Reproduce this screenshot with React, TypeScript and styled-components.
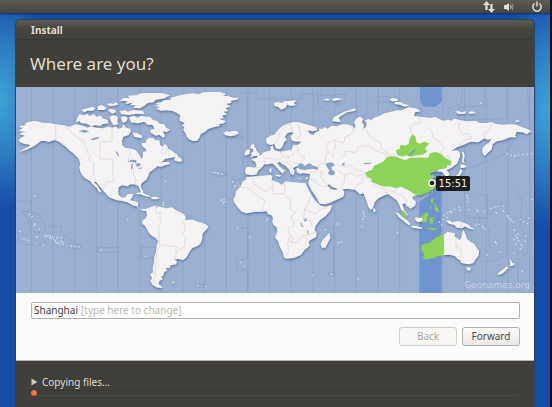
import React from "react";
import styled, { createGlobalStyle } from "styled-components";

const GlobalStyle = createGlobalStyle`
  * { box-sizing: border-box; }
  body { margin: 0; font-family: "Noto Sans", "Open Sans", sans-serif; }
  button, input { font: inherit; margin: 0; }
`;

const Desktop = styled.div`
  min-height: 100vh;
  display: flex;
  flex-direction: column;
  border-right: 2px solid #08101c;
  background:
    radial-gradient(ellipse 60px 110px at 0 100px, #3fa3d6 0, #3fa3d6aa 40%, transparent 100%),
    radial-gradient(ellipse 60px 120px at 100% 110px, #3fa3d9 0, #3fa3d9aa 40%, transparent 100%),
    #164ba6;
`;

const TopPanel = styled.header`
  height: 13px;
  display: flex;
  justify-content: flex-end;
  align-items: center;
  gap: 8px;
  padding-right: 7px;
  background: linear-gradient(#5d5b54, #45443e);
  box-shadow: 0 1px 2px #102a60;
`;

const PanelButton = styled.button`
  display: flex;
  padding: 0;
  border: 0;
  background: none;
  color: #e4dfd3;
  &:last-child { margin-left: 8px; }
`;

const InstallerWindow = styled.main`
  flex: 1;
  display: flex;
  flex-direction: column;
  margin: 7px 16px 0;
  border-radius: 5px 5px 0 0;
  overflow: hidden;
  background: #403f3a;
  box-shadow: 0 0 1px 1px #30405c;
`;

const TitleBar = styled.div`
  height: 20px;
  padding-left: 15px;
  border-bottom: 1px solid #3a3935;
  background: linear-gradient(#5e5c52, #45443e 9px, #403f3a);
  color: #e2ddd2;
  font-size: 10px;
  font-weight: 700;
  line-height: 20px;
`;

const Heading = styled.h1`
  margin: 0;
  padding: 0 14px;
  color: #dfdbd2;
  font-size: 17px;
  font-weight: 400;
  line-height: 47px;
`;

const MapFrame = styled.section`
  position: relative;
  background: #9aafd2;
`;

const MapDrawing = styled.svg`
  display: block;
  width: 100%;
  height: auto;
`;

const CityTime = styled.span`
  position: absolute;
  left: 81%;
  top: 43%;
  padding: 0 3px;
  border-radius: 2px;
  background: #1d1d1c;
  color: #f2f2ee;
  font: 10px/15px "DejaVu Sans", sans-serif;
`;

const Credit = styled.span`
  position: absolute;
  right: 4px;
  bottom: 2px;
  color: #c9d3e4;
  font: 9px/12px "DejaVu Sans", sans-serif;
`;

const Form = styled.form`
  display: flex;
  flex-direction: column;
  gap: 8px;
  padding: 9px 14px 14px 15px;
  border-bottom: 1px solid #b9b7b0;
  background: #fdfcfc;
`;

const CityField = styled.label`
  display: flex;
  align-items: center;
  gap: 3px;
  height: 17px;
  padding: 0 2px;
  border: 1px solid #b4b0aa;
  border-radius: 2px;
  background: #fff;
  font-size: 10px;
  line-height: 15px;
`;

const CityInput = styled.input`
  field-sizing: content;
  min-width: 0;
  padding: 0;
  border: 0;
  outline: 0;
  background: none;
  color: #3c3c3c;
`;

const Hint = styled.span`
  color: #bdb6ac;
`;

const Actions = styled.div`
  display: flex;
  justify-content: flex-end;
  gap: 5px;
`;

const ActionButton = styled.button`
  width: 58px;
  height: 19px;
  padding: 0;
  border: 1px solid #b3afa9;
  border-radius: 3px;
  background: linear-gradient(#fcfcfb, #eae8e6);
  color: #4c4c4c;
  font-size: 10px;
  line-height: 17px;
  &:disabled {
    border-color: #d3d0cc;
    background: #f8f7f6;
    color: #a9a7a3;
  }
`;

const Status = styled.footer`
  flex: 1;
  padding: 14px 14px 0 15px;
  background: #403f3a;
`;

const Expander = styled.button`
  display: flex;
  align-items: center;
  gap: 4px;
  padding: 0;
  border: 0;
  background: none;
  color: #dfdbd2;
  font-size: 10px;
  line-height: 14px;
`;

const Trough = styled.div`
  height: 6px;
  margin-top: 1px;
  border-top: 1px solid #383733;
  border-bottom: 1px solid #4a4944;
  border-radius: 3px;
`;

const Progress = styled.div`
  width: 6px;
  height: 6px;
  margin-top: -1px;
  border-radius: 3px;
  background: radial-gradient(#f58a5c, #d8542a);
`;

const pts = (dx: number, dy: number, s: string) =>
  "M" + s.split(" ").map((p) => {
    const [x, y] = p.split(",").map(Number);
    return `${x + dx},${y + dy}`;
  }).join("L");
const shape = (dx: number, dy: number, s: string) => pts(dx, dy, s) + "Z";

const land = [
  // North America
  shape(0, 0, "8,124 30,120 26,116 38,110 60,108 80,113 100,114 120,118 145,121 160,125 180,118 200,122 215,128 225,124 240,128 262,130 275,125 290,128 300,124 306,131 318,128 322,118 330,128 342,131 345,138 338,150 322,155 318,168 319,180 327,188 350,192 360,196 366,204 372,212 376,222 381,215 380,202 392,198 387,190 379,184 377,175 390,173 391,165 400,158 412,160 418,166 430,166 432,178 438,185 446,178 452,181 457,192 467,196 474,203 482,207 486,214 468,218 448,221 440,229 430,238 442,231 458,231 462,236 446,241 436,245 425,243 415,251 407,258 401,260 397,272 392,283 378,294 373,303 382,320 380,328 375,322 368,304 355,298 342,298 335,304 318,301 308,307 306,318 308,330 318,338 328,337 334,328 352,326 348,338 342,346 358,349 367,354 365,366 373,373 392,371 393,377 382,377 370,372 361,363 353,363 335,352 315,347 300,345 280,337 266,322 255,308 240,291 233,290 245,303 256,321 250,322 242,309 230,298 222,288 208,280 200,272 194,262 190,248 193,236 188,222 180,213 172,205 160,196 150,185 138,178 130,170 115,165 98,171 88,168 75,168 62,178 48,187 30,194 8,201 28,190 42,182 38,178 28,178 12,172 8,165 18,156 28,153 10,147 20,142 32,142 8,137 20,130"),
  // Canadian archipelago
  shape(0, 0, "184,98 190,88 205,91 213,86 220,93 235,88 240,95 255,92 260,100 275,105 277,115 260,117 253,124 240,120 225,123 212,116 195,114 190,108 180,113"),
  shape(0, 0, "196,76 212,70 230,66 239,70 230,77 215,77 205,82"),
  shape(0, 0, "244,65 256,59 272,69 265,75 246,75"),
  shape(0, 0, "272,57 285,55 290,58 300,52 307,58 295,62 282,63"),
  shape(0, 0, "276,75 285,72 298,75 300,82 288,86"),
  shape(0, 0, "312,78 328,76 335,80 352,75 380,77 386,88 360,86 340,90 315,87"),
  shape(0, 0, "280,96 292,90 306,96 304,110 308,118 292,121 286,110"),
  shape(0, 0, "314,97 326,93 335,99 331,110 320,113"),
  shape(0, 0, "310,47 325,38 342,40 335,32 360,31 375,25 405,24 440,25 462,31 445,40 420,44 412,52 395,54 385,62 372,70 350,68 360,61 342,61 350,53 328,57 335,49"),
  shape(0, 0, "340,97 352,92 365,98 375,92 392,95 403,95 410,104 424,108 430,116 445,118 450,128 462,134 452,142 440,139 447,153 442,159 430,149 420,152 405,143 403,136 416,131 410,120 395,119 385,110 365,115 345,112"),
  shape(0, 0, "350,144 362,143 378,152 378,160 362,157 355,155"),
  shape(0, 0, "480,212 493,218 499,226 494,231 480,228 474,224"),
  // Greenland, Iceland
  shape(372, 0, "42,62 55,60 48,55 65,52 72,46 92,45 92,38 110,33 122,31 138,27 160,25 175,28 190,22 215,21 240,21 258,27 250,33 265,33 278,38 298,38 290,44 272,47 275,53 258,57 272,64 257,70 265,78 250,80 262,88 245,92 252,99 237,102 257,108 252,115 236,118 240,122 215,128 205,132 195,140 182,147 178,158 170,168 160,168 150,164 141,157 137,145 130,135 133,126 126,122 134,114 120,107 118,100 122,92 112,85 98,78 80,76 62,77 48,70 60,66"),
  shape(372, 0, "250,141 258,142 260,137 268,142 275,138 290,138 297,145 285,151 272,154 255,150"),
  // Caribbean
  shape(0, 300, "358,27 368,22 382,25 403,33 402,36 385,33 375,28"),
  shape(0, 300, "385,39 394,40 392,43"), shape(0, 300, "405,36 420,35 432,39 422,43 408,42"),
  // South America
  shape(0, 300, "389,72 400,68 415,62 421,62 420,72 425,64 438,67 452,70 468,67 478,74 492,82 504,88 510,98 506,104 530,104 546,110 560,114 574,121 577,127 567,138 560,146 558,165 553,176 545,183 528,190 519,203 512,217 500,226 490,222 476,223 483,230 480,238 464,241 461,250 448,249 454,256 445,261 441,273 435,275 440,283 430,288 428,298 441,308 424,308 410,300 403,288 408,280 402,268 411,262 410,250 414,232 414,218 420,202 422,183 426,168 420,160 405,151 397,141 388,123 379,116 379,106 388,101 393,92 391,80"),
  shape(0, 300, "466,291 476,290 474,294"),
  // British Isles
  shape(642, 0, "64,179 69,177 75,181 72,187 78,188 79,197 89,206 87,213 71,213 60,217 66,209 62,204 70,201 69,193 60,189"),
  shape(642, 0, "43,205 49,195 56,192 60,197 58,207 46,212"),
  // Eurasia
  shape(642, 0, "48,248 55,245 76,248 80,240 75,230 66,225 66,221 79,220 84,213 93,211 100,202 113,199 122,196 121,184 129,182 130,190 134,196 150,200 165,198 184,195 190,181 205,179 214,170 192,169 184,165 182,153 191,144 184,141 172,145 164,155 170,165 162,172 157,186 149,193 138,190 133,177 120,180 109,174 108,161 121,152 133,149 145,134 158,122 172,116 190,111 207,112 225,117 245,122 260,128 262,136 248,139 232,136 240,147 250,150 257,142 268,138 268,129 276,133 283,126 292,131 305,122 320,124 336,118 352,118 367,123 374,132 376,120 372,112 380,100 390,95 400,103 396,111 402,121 399,132 408,126 410,115 404,106 418,102 424,106 432,98 450,92 463,85 480,81 500,76 515,76 535,67 558,70 572,79 555,82 552,93 578,96 600,99 615,96 640,107 655,104 665,107 672,101 690,105 710,109 738,108 750,114 770,114 785,111 798,117 820,119 836,118 860,119 874,126 892,132 904,139 890,148 878,142 860,140 855,152 860,157 840,157 820,165 800,169 788,178 785,193 772,205 763,213 757,203 757,189 766,180 778,172 784,162 772,164 763,160 745,172 721,170 700,180 680,187 665,198 682,196 690,203 690,215 682,235 665,248 650,255 658,266 653,276 644,271 637,261 618,258 600,264 598,272 615,273 602,285 611,296 615,308 605,314 590,322 570,330 555,331 546,338 558,350 555,363 541,371 531,362 523,355 517,358 522,374 534,390 528,394 516,382 508,360 500,346 490,338 474,327 460,332 445,340 434,352 430,366 422,376 416,367 408,345 401,325 390,328 375,314 350,311 330,314 307,306 297,298 292,300 302,313 315,315 335,310 343,320 340,335 320,344 298,354 285,358 270,356 258,335 244,315 237,300 235,293 239,280 240,267 220,264 210,267 201,261 199,250 209,247 200,243 188,250 194,258 191,270 182,266 178,254 168,244 154,235 148,230 142,235 150,246 167,258 160,260 160,267 150,259 137,244 127,235 115,238 103,238 96,247 84,257 80,268 66,271 48,268 45,260"),
  shape(642, 0, "137,269 153,270 150,275 138,273"), shape(642, 0, "119,250 125,251 123,263 118,260"), shape(642, 0, "201,279 214,281 212,284"), shape(642, 0, "224,280 236,277 230,283"),
  // Arctic islands
  shape(642, 0, "131,54 143,51 156,54 163,48 180,48 201,45 191,54 198,60 184,63 172,59 166,68 154,74 145,66 134,63"),
  shape(642, 0, "306,107 312,96 326,89 342,80 357,76 371,71 381,72 371,78 350,82 337,90 326,98 332,111 318,110"),
  shape(642, 0, "280,43 291,41 301,44 291,47"), shape(642, 0, "306,43 318,38 339,42 325,45 312,48"),
  shape(1092, 0, "28,43 40,39 53,43 53,48 37,49"), shape(1092, 0, "44,51 63,51 71,57 89,61 76,65 60,59 45,57"),
  shape(1092, 0, "225,80 236,78 244,82 259,79 256,86 237,87"), shape(1092, 0, "264,82 276,79 288,84 270,87"), shape(1092, 0, "404,107 416,106 421,109 408,111"),
  // Japan and Sakhalin
  shape(1092, 0, "246,201 251,201 254,214 251,229 256,235 246,232 248,215"),
  shape(1092, 0, "242,239 250,238 260,244 251,249 241,248"),
  shape(1092, 0, "241,251 247,258 242,268 235,276 224,275 235,267"),
  // Africa, Madagascar
  shape(582, 0, "109,276 126,275 155,272 180,270 187,273 185,286 205,292 215,299 226,289 245,291 270,293 286,294 292,306 304,329 314,345 332,362 345,365 366,361 361,377 347,393 330,405 316,424 314,437 320,443 318,456 298,467 296,473 299,482 284,495 272,510 252,519 227,521 221,514 219,503 209,484 204,469 195,457 202,440 200,427 190,419 187,410 189,399 184,391 174,387 169,378 151,381 136,380 110,385 95,380 83,367 72,351 71,341 76,333 77,320 92,304 97,291 109,283"),
  shape(582, 300, "358,143 361,158 353,175 346,188 335,188 332,177 338,164 349,154"),
  shape(582, 300, "488,69 496,73 496,81 491,81"),
  // Indonesia, New Guinea
  shape(1062, 300, "76,82 85,84 98,97 110,104 122,117 116,121 101,108 87,97"),
  shape(1062, 300, "120,122 137,123 157,128 155,132 130,128"),
  shape(1062, 300, "135,97 148,98 160,98 157,109 144,112 136,106"),
  shape(1062, 300, "228,107 238,106 246,112 265,108 282,113 295,119 301,126 314,133 300,132 285,124 276,130 260,128 254,120 237,116"),
  // Australia, New Zealand
  shape(1062, 300, "220,149 228,145 231,140 247,143 256,145 253,154 269,165 275,155 277,140 281,136 287,149 291,162 304,172 314,178 320,188 327,198 326,211 316,224 310,234 296,238 285,236 274,233 269,224 261,221 258,215 247,211 234,209 220,211"),
  shape(1062, 300, "288,246 303,248 301,256 293,257"),
  shape(1062, 300, "419,222 424,228 428,235 435,236 427,243 417,243 421,238"),
  shape(1062, 300, "410,244 416,247 407,257 396,266 386,270 383,265 398,255"),
].join("");

const water = [
  shape(642, 0, "205,236 216,235 224,243 232,237 240,235 247,241 264,247 263,254 245,251 225,255 209,253 202,246"),
  shape(642, 0, "287,237 298,232 310,234 314,242 304,245 306,254 315,261 313,270 300,271 294,265 298,256 291,247"),
  shape(642, 0, "336,235 344,233 343,241 338,243"), shape(642, 0, "400,234 426,233 420,237 405,238"),
  shape(0, 0, "188,138 203,134 220,138 207,144 198,141"), shape(0, 0, "224,163 240,157 252,156 244,162 228,166"),
  shape(0, 0, "299,197 306,203 310,216 303,209"),
  shape(0, 0, "333,231 345,224 360,225 362,234 349,231"), shape(0, 0, "345,240 351,235 350,250 345,254"), shape(0, 0, "358,236 370,234 375,240 364,246"), shape(0, 0, "364,252 378,246 376,251"),
  shape(582, 300, "281,101 290,99 291,107 283,110"), shape(582, 300, "271,115 274,113 280,127 276,126"), shape(582, 300, "291,134 295,138 296,150 292,145"),
].join("");

const green = [
  shape(0, 0, "1047,265 1060,257 1068,256 1074,244 1090,236 1105,228 1112,218 1125,214 1140,215 1155,223 1170,226 1180,220 1205,218 1237,219 1243,205 1258,202 1276,207 1287,219 1306,229 1303,240 1293,240 1290,249 1272,252 1257,259 1246,261 1240,269 1256,271 1246,282 1254,294 1258,307 1247,313 1240,320 1222,327 1207,330 1193,326 1180,316 1168,311 1156,304 1140,309 1124,304 1104,304 1089,300 1080,295 1069,291 1065,280 1054,275"),
  shape(1092, 0, "48,196 59,193 62,181 78,182 87,176 90,160 98,149 106,155 109,172 120,177 133,170 147,176 139,183 135,191 141,200 127,209 110,210 95,215 80,211 66,214 53,210"),
  shape(1062, 300, "154,181 165,176 180,173 188,166 194,162 198,155 207,156 213,149 221,149 221,211 205,212 195,218 178,221 170,224 160,220 162,208 154,195"),
  shape(1062, 300, "146,97 158,93 168,81 178,89 171,95 171,107 163,113 156,110 160,98"),
  shape(1062, 300, "94,76 103,80 111,92 109,98 99,92"),
  shape(1062, 300, "179,99 196,97 187,103 193,108 187,109 192,118 186,115 181,119"),
  shape(1062, 300, "184,39 190,42 188,51 195,57 187,55 182,48"), shape(1062, 300, "192,70 202,66 208,78 202,81 196,77"),
  shape(1062, 300, "193,59 199,60 200,66 194,64"), shape(1062, 300, "182,63 185,64 175,76"), shape(1062, 300, "184,17 189,18 186,26"), shape(1062, 300, "131,33 139,33 137,38 132,38"),
  shape(1062, 300, "167,128 180,130 205,129 192,136 178,133"),
].join("");

const borders = [
  pts(0, 0, "119,118 119,165 135,172 149,183"), pts(0, 0, "145,121 165,142 186,160 206,170 204,182 217,190 213,203 224,212 218,224 233,236 232,263 240,290"),
  pts(0, 0, "288,129 288,168 252,171 252,222 290,223 292,290 272,291 268,306 258,318"), pts(0, 0, "340,190 342,215 337,223 353,250 352,267 360,285 358,298"),
  pts(372, 0, "68,191 62,202 72,208 82,196 80,189"),
  pts(0, 300, "418,70 423,85 434,82 431,97 436,111 426,124 430,146 427,157 433,183 424,196 421,221 418,252 414,290"), pts(0, 300, "435,183 449,178 464,185 478,183 491,194 505,184 509,161 500,146 509,132 501,108"), pts(0, 300, "474,194 482,197 479,213 474,223"),
  pts(642, 0, "133,177 147,157 147,144 169,120 183,117 187,143"), pts(642, 0, "204,114 206,125 213,147 199,166"), pts(642, 0, "76,248 94,248"), pts(642, 0, "103,237 107,222 98,209"), pts(642, 0, "107,222 125,219 137,225 150,224 158,214 151,200"), pts(642, 0, "158,214 175,216 191,208 183,195"), pts(642, 0, "190,180 205,190 204,203 213,212 223,214 223,222 206,239"), pts(642, 0, "153,229 173,233 188,249"), pts(642, 0, "175,216 181,231 202,235"),
  pts(642, 0, "264,248 271,237 286,235 287,211 300,202 288,194 292,174 313,166 341,174 345,156 370,143 365,121"), pts(642, 0, "313,166 317,188 306,205 310,219"), pts(642, 0, "335,218 348,209 344,198 377,203 385,185 416,182 440,198 460,205 473,218"), pts(642, 0, "408,132 415,150 433,164 449,171 455,190 477,208 500,210"),
  pts(642, 0, "327,240 345,246 361,239 374,253 395,259 405,264"), pts(642, 0, "325,257 345,270 342,294 332,311"), pts(642, 0, "345,270 364,264 379,274 397,268 411,280 429,293"), pts(642, 0, "375,312 381,300 397,291 397,276"), pts(642, 0, "240,264 263,257 279,262 271,273 286,294 291,301"), pts(642, 0, "239,281 253,285 263,298 279,304 301,308"), pts(642, 0, "429,294 437,304 464,312 469,326 478,316 493,322 503,308"),
  pts(1092, 0, "98,151 90,128 101,116 122,114 119,96"), pts(1092, 0, "182,204 193,191 181,173 158,157 155,137 144,126"), pts(1092, 0, "170,202 193,220 205,210 213,230"), pts(1092, 0, "238,185 248,167 275,160 263,145 247,148 236,127 242,106"), pts(1092, 0, "318,163 309,148 326,137 337,114"),
  pts(582, 300, "92,7 112,8 142,34 164,47 160,68 151,80"), pts(582, 300, "128,-27 130,-5 168,20 189,3 184,-13"), pts(582, 300, "189,3 188,27 222,26 242,48 240,72 258,81 242,96 253,110 246,125 233,130 240,151 233,175 236,196 228,219"), pts(582, 300, "303,30 294,55 285,72 302,81 318,86 330,75 351,67"), pts(582, 300, "240,151 250,158 241,173 264,172 279,152 294,151 318,140"), pts(582, 300, "279,152 292,165 283,184"), pts(582, 300, "224,-9 225,25"), pts(582, 300, "285,72 280,101 303,109 305,120"),
  pts(1062, 300, "258,155 258,188 272,190 273,217"), pts(1062, 300, "72,15 82,30 93,28 106,44 111,65"), pts(1062, 300, "272,109 273,128"),
].join("");

const zoneLines = [
  ...Array.from({ length: 24 }, (_, i) => `M${46 + i * 65},6V624`),
  pts(0, 300, "0,49 46,49 46,75 20,78 36,105 44,135 58,141 85,141 88,125 70,89 23,78"), pts(0, 300, "8,128 8,165 32,180 45,180 75,175"), pts(0, 300, "105,124 135,124 136,142 178,178 196,178 196,191 162,191"),
  pts(0, 300, "246,188 305,188 305,202 246,202 246,188"), pts(0, 300, "422,187 376,187 376,221 412,221"), pts(0, 300, "540,298 566,298 566,307 540,307 540,298"),
  pts(372, 0, "305,129 305,158 272,158"), pts(372, 0, "218,259 218,273 256,273 256,262 218,259"), pts(372, 0, "321,30 321,200 307,222 314,275 280,291 277,305 300,305"),
  pts(642, 0, "30,23 79,23 79,42 211,42 211,27 264,27 264,60 285,80"), pts(642, 0, "274,6 274,33 347,27 347,53 314,60"), pts(642, 0, "410,10 410,90 397,93"), pts(642, 0, "435,35 480,35 480,51 435,51"),
  pts(1092, 0, "247,6 247,54 204,72 204,96"), pts(1092, 0, "314,6 314,63 238,67 232,104 380,102 380,6"), pts(1092, 0, "458,125 405,160 380,205 265,251"), pts(1092, 0, "442,10 448,105 462,118 462,139"),
  pts(582, 300, "81,128 113,128 113,222 80,222 80,255 113,255 113,324"), pts(582, 300, "356,262 371,262 371,271 356,271 356,262"), pts(582, 300, "340,127 371,127 371,260"),
  pts(1062, 300, "327,30 352,30 352,99 290,99"), pts(1062, 300, "390,50 410,58 410,205 384,225 330,230"), pts(1062, 300, "440,20 456,45 450,125 474,160 474,202 444,223 444,324"), pts(1062, 300, "328,93 328,125 358,129 358,190"),
].join("");

const islets: [number, number, string][] = [
  [0, 300, "56,34 40,88 48,95 57,116 55,120 69,133 12,139 24,163 37,166 60,155 64,157 60,176 82,181 86,152 91,154 96,152 101,158 105,160 110,156 113,163 118,168 123,160 127,174 132,178 136,169 141,177 140,172 121,173 125,155 136,158 103,153 166,183 176,184 189,185 255,196 389,214 335,103 545,302 569,305 398,33 442,54 443,61"],
  [372, 0, "220,262 225,263 233,262 235,266 245,267 76,289 278,291 283,303 287,304 297,302"],
  [582, 300, "35,46 42,44 45,50 40,53 174,101 170,107 83,128 119,156 92,232 104,244 309,271 365,268 444,282 384,117 385,174 393,171 346,133 460,80 461,87 463,94 459,102 457,125"],
  [1092, 0, "382,207 393,211 404,213 415,210 428,209 441,208 455,206 302,55"],
  [1062, 300, "290,31 293,39 294,50 267,68 271,75 252,73 240,79 244,81 233,85 222,92 296,74 321,76 324,80 344,79 363,70 374,66 383,65 399,64 400,78 379,83 413,96 418,101 423,105 429,110 412,92 451,103 477,100 473,116 461,110 433,135 438,151 445,147 433,164 442,159 446,168 439,177 454,180 451,191 467,154 466,169 432,205 457,259 376,171 379,175 350,210 391,202 82,142 486,43 219,104 232,98 215,120 208,111 318,120 327,118 336,125 341,128 348,131"],
];

const IsletDots = () => (
  <path
    d={islets.map(([dx, dy, s]) => s.split(" ").map((p) => {
      const [x, y] = p.split(",").map(Number);
      return `M${x + dx - 2},${y + dy}h4`;
    }).join("")).join("")}
    stroke="#e4e7ed"
    strokeWidth="4"
    opacity=".85"
  />
);

const WorldMap = () => (
  <MapDrawing viewBox="0 6 1554 618" role="img" aria-label="World time zone map">
    <defs>
      <filter id="coast" x="-2%" y="-2%" width="104%" height="104%">
        <feDropShadow dx="1" dy="4" stdDeviation="3" floodColor="#455d86" floodOpacity=".75" />
      </filter>
    </defs>
    <rect y="6" width="1554" height="618" fill="#9aafd2" />
    <path d="M1212,6H1277V50L1260,65H1222L1212,46ZM1210,350V624H1277V262H1240V330Z" fill="#7094d0" />
    <path d={zoneLines} fill="none" stroke="#8298bf" strokeWidth="2" opacity=".7" />
    <path d={land} fill="#f5f2f3" filter="url(#coast)" />
    <path d={water} fill="#8ba2c9" />
    <path d={borders} fill="none" stroke="#dcd8d8" strokeWidth="2.5" />
    <path d={green} fill="#8dd35a" stroke="#80c750" strokeWidth="1" />
    <path d="M1177,211Q1190,206 1198,192" fill="none" stroke="#7595b2" strokeWidth="4" />
    <IsletDots />
    <circle cx="1248" cy="294" r="9" fill="#20201f" stroke="#f5f5f2" strokeWidth="4" />
  </MapDrawing>
);

const NetworkIcon = () => (
  <svg width="12" height="12" viewBox="0 0 12 12" fill="currentColor" aria-hidden="true">
    <path d="M3.5 0L7 4H4.600V9H2.400V4H0ZM8.500 12L5 8H7.400V3H9.600V8H12Z" />
  </svg>
);
const SoundIcon = () => (
  <svg width="12" height="12" viewBox="0 0 12 12" fill="none" stroke="currentColor" aria-hidden="true">
    <path d="M1 4H3L6 2V10L3 8H1Z" fill="currentColor" stroke="none" />
    <path d="M7.500 4.200Q8.800 6 7.500 7.800" />
    <path d="M9 2.800Q11.200 6 9 9.200" opacity=".5" />
  </svg>
);
const PowerIcon = () => (
  <svg width="12" height="12" viewBox="0 0 12 12" fill="none" stroke="currentColor" strokeWidth="1.500" aria-hidden="true">
    <path d="M3.600 2.500A4.200 4.200 0 1 0 8.400 2.500M6 .5V5.500" />
  </svg>
);

export default function App() {
  const [city, setCity] = React.useState("Shanghai");
  return (
    <Desktop>
      <GlobalStyle />
      <TopPanel>
        <PanelButton aria-label="Network"><NetworkIcon /></PanelButton>
        <PanelButton aria-label="Sound"><SoundIcon /></PanelButton>
        <PanelButton aria-label="Power"><PowerIcon /></PanelButton>
      </TopPanel>
      <InstallerWindow>
        <TitleBar>Install</TitleBar>
        <Heading>Where are you?</Heading>
        <MapFrame>
          <WorldMap />
          <CityTime>15:51</CityTime>
          <Credit>Geonames.org</Credit>
        </MapFrame>
        <Form onSubmit={(e) => e.preventDefault()}>
          <CityField>
            <CityInput aria-label="City" value={city} onChange={(e) => setCity(e.target.value)} />
            <Hint>[type here to change]</Hint>
          </CityField>
          <Actions>
            <ActionButton type="button" disabled>Back</ActionButton>
            <ActionButton type="submit">Forward</ActionButton>
          </Actions>
        </Form>
        <Status>
          <Expander aria-expanded="false">
            <svg width="7" height="8" viewBox="0 0 7 8" aria-hidden="true"><path d="M.5 .5L6.500 4L.5 7.500Z" fill="#c9c5bc" /></svg>
            Copying files...
          </Expander>
          <Trough role="progressbar" aria-label="Copying files" aria-valuenow={1} aria-valuemin={0} aria-valuemax={100}>
            <Progress />
          </Trough>
        </Status>
      </InstallerWindow>
    </Desktop>
  );
}
